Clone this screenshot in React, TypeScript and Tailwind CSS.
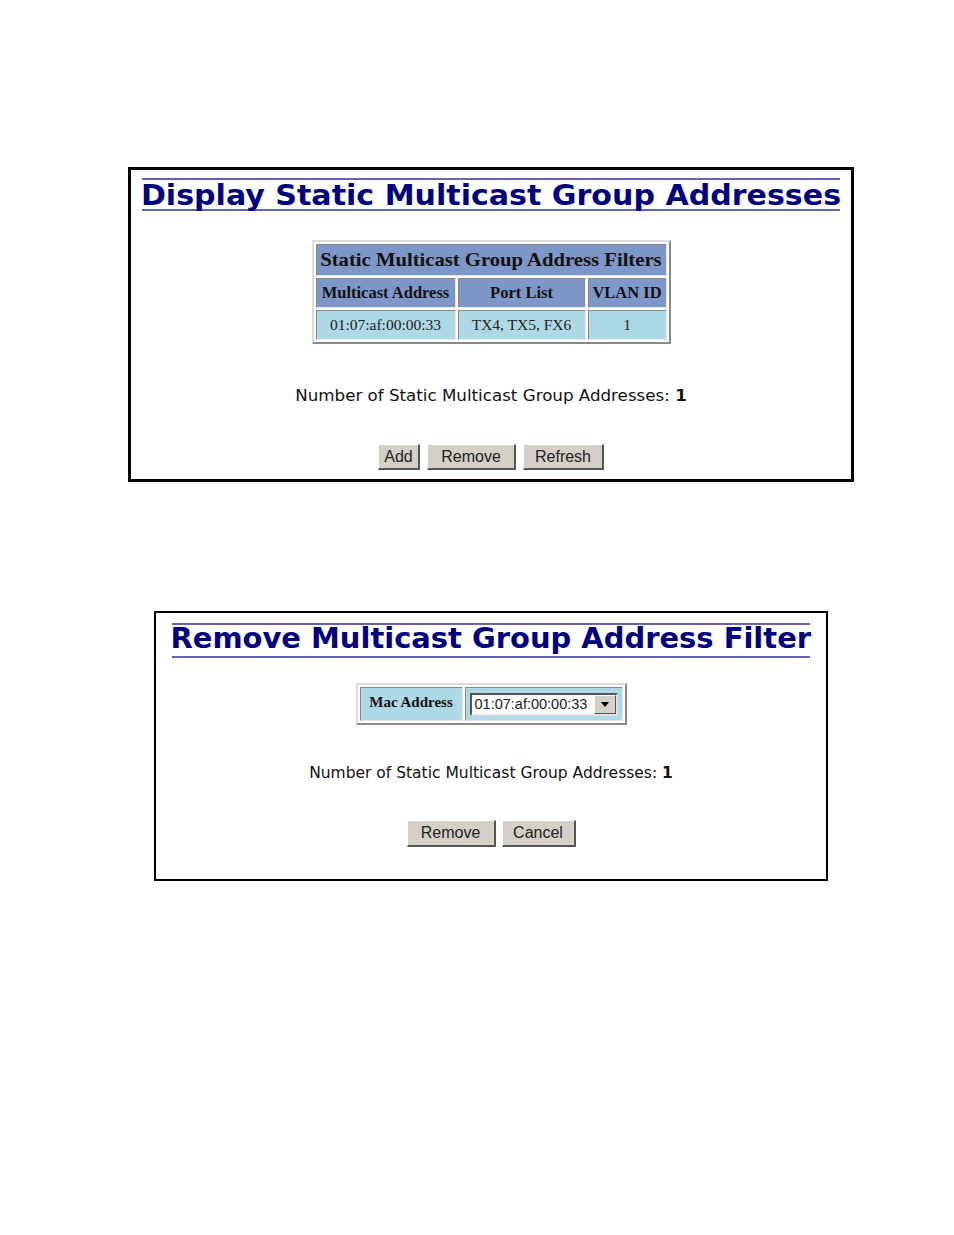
import React from 'react'

const verdana = "font-['DejaVu_Sans',Verdana,sans-serif]"
const times = "font-['Liberation_Serif','Times_New_Roman',serif]"
const arial = "font-['Liberation_Sans',Arial,sans-serif]"

function Title({ text, box, scale }: { text: string; box: string; scale: string }) {
  return (
    <div className={`border-y-2 border-[#6464b0] w-full text-center ${box}`}>
      <h1 className={`${verdana} text-[28px] font-bold text-[#000080] whitespace-nowrap`}>
        <span className={`inline-block ${scale}`}>{text}</span>
      </h1>
    </div>
  )
}

function Btn({ label, w, h }: { label: string; w: string; h: string }) {
  return (
    <button
      className={`${arial} ${w} ${h} text-[16px] text-[#222] bg-[#d4d0c8] border-t border-l border-t-white border-l-white border-b-2 border-r-2 border-b-[#555] border-r-[#555] leading-none`}
    >
      {label}
    </button>
  )
}

function CountLine({ size }: { size: string }) {
  return (
    <p className={`${verdana} ${size} text-[#111] text-center`}>
      Number of Static Multicast Group Addresses: <b>1</b>
    </p>
  )
}

export default function App() {
  const cell = 'border border-t-[#888] border-l-[#888] border-b-[#e8e8e8] border-r-[#e8e8e8]'
  return (
    <div className="w-[954px] h-[1235px] bg-white pl-[28px] flex flex-col items-center">
      {/* display frame */}
      <div className="mt-[167px] w-[726px] h-[315px] border-[3px] border-black px-[11px] pt-[8px] flex flex-col items-center">
        <Title text="Display Static Multicast Group Addresses" box="pt-[3px] leading-[26px]" scale="scale-x-[1.074]" />
        <table className="mt-[29px] border-2 border-t-[#dcdcdc] border-l-[#dcdcdc] border-b-[#8a8a8a] border-r-[#8a8a8a] border-separate border-spacing-[2px]">
          <tbody className={times}>
            <tr>
              <td colSpan={3} className={`${cell} bg-[#7d97c9] text-[19px] font-bold text-[#111] h-[32px] px-[4px] text-center`}>
                <span className="inline-block scale-x-[1.088]">Static Multicast Group Address Filters</span>
              </td>
            </tr>
            <tr className="bg-[#7d97c9] text-[16.5px] font-bold text-[#111] h-[30px]">
              <td className={`${cell} w-[140px] text-center`}>Multicast Address</td>
              <td className={`${cell} w-[128px] text-center`}>Port List</td>
              <td className={`${cell} w-[79px] text-center`}>VLAN ID</td>
            </tr>
            <tr className="bg-[#add8e6] text-[15.5px] text-[#222] h-[30px]">
              <td className={`${cell} text-center`}>01:07:af:00:00:33</td>
              <td className={`${cell} text-center`}>TX4, TX5, FX6</td>
              <td className={`${cell} text-center`}>1</td>
            </tr>
          </tbody>
        </table>
        <div className="mt-[39px]">
          <CountLine size="text-[16.7px]" />
        </div>
        <div className="mt-[36px] flex gap-[7px]">
          <Btn label="Add" w="w-[42px]" h="h-[26px]" />
          <Btn label="Remove" w="w-[89px]" h="h-[26px]" />
          <Btn label="Refresh" w="w-[81px]" h="h-[26px]" />
        </div>
      </div>

      {/* remove frame */}
      <div className="mt-[129px] w-[674px] h-[270px] border-2 border-black px-[16px] pt-[10px] flex flex-col items-center">
        <Title text="Remove Multicast Group Address Filter" box="pb-[3px] leading-[28px]" scale="scale-x-[1.034]" />
        <table className="mt-[25px] border-2 border-t-[#dcdcdc] border-l-[#dcdcdc] border-b-[#8a8a8a] border-r-[#8a8a8a] border-separate border-spacing-[2px]">
          <tbody>
            <tr className="bg-[#add8e6] h-[34px]">
              <td className={`${cell} ${times} w-[103px] text-[15px] font-bold text-[#111] text-center align-top pt-[3px]`}>
                Mac Address
              </td>
              <td className={`${cell} w-[158px] px-[4px]`}>
                <div className="flex items-center h-[23px] w-[148px] bg-white border-2 border-t-[#555] border-l-[#555] border-b-[#e0e0e0] border-r-[#e0e0e0]">
                  <span className={`${arial} flex-1 text-[14.5px] text-[#222] pl-[3px] leading-none`}>01:07:af:00:00:33</span>
                  <span className="w-[22px] h-[19px] bg-[#d4d0c8] border border-t-white border-l-white border-b-[#555] border-r-[#555] flex items-center justify-center">
                    <svg width="8" height="5" viewBox="0 0 8 5"><path d="M0 0h8L4 5z" fill="#000" /></svg>
                  </span>
                </div>
              </td>
            </tr>
          </tbody>
        </table>
        <div className="mt-[37px]">
          <CountLine size="text-[15.5px]" />
        </div>
        <div className="mt-[35px] flex gap-[6px]">
          <Btn label="Remove" w="w-[89px]" h="h-[27px]" />
          <Btn label="Cancel" w="w-[74px]" h="h-[27px]" />
        </div>
      </div>
    </div>
  )
}
